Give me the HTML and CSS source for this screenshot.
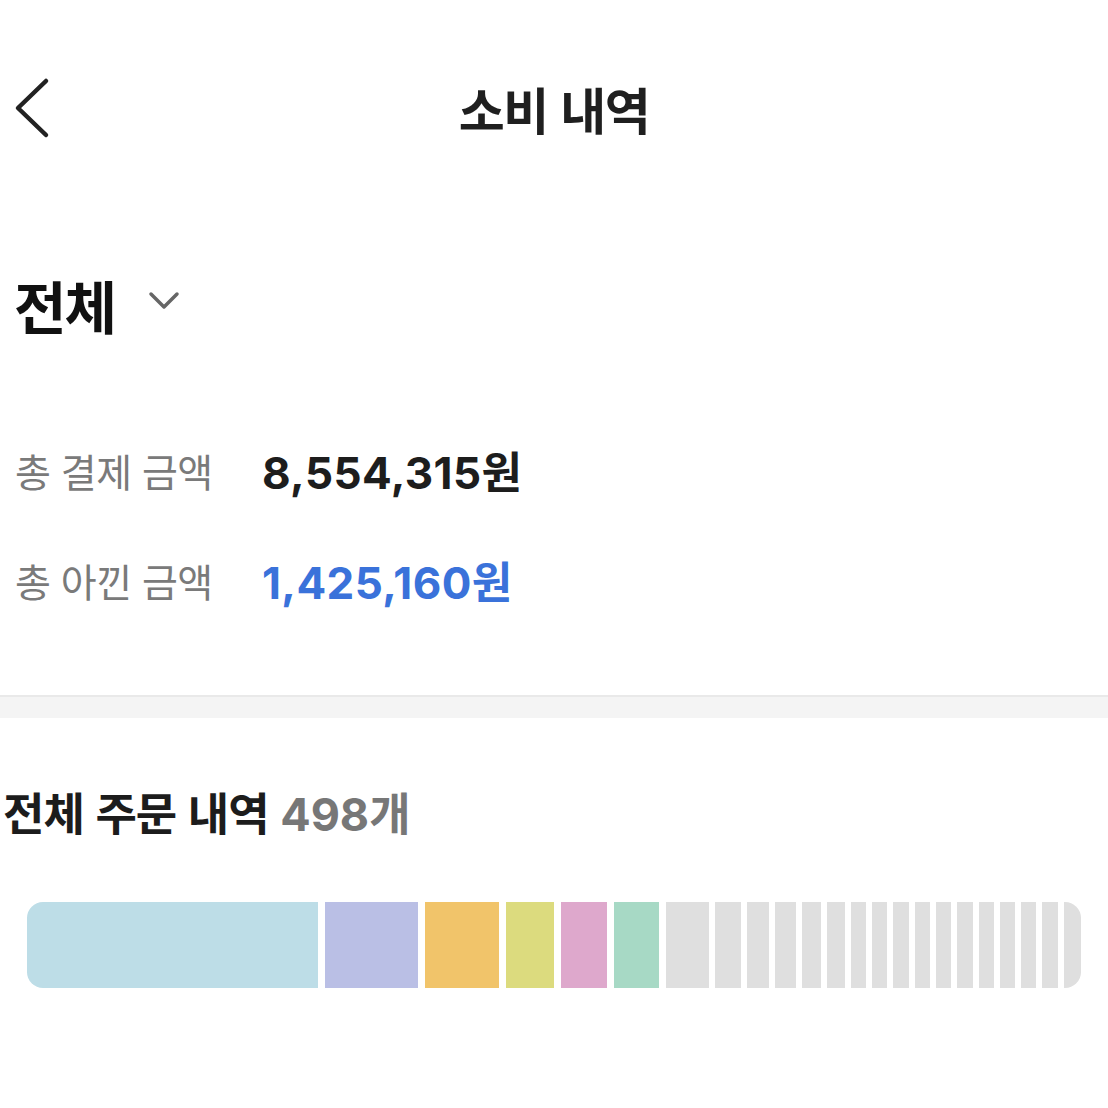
FILE: index.html
```html
<!DOCTYPE html>
<html lang="ko">
<head>
<meta charset="utf-8">
<title>소비 내역</title>
<link rel="stylesheet" href="styles.css">
</head>
<body>
<div class="page">
  <header class="header">
    <button class="back" aria-label="뒤로">
      <svg width="40" height="64" viewBox="0 0 40 64"><polyline points="34,5 6,32 34,59" fill="none" stroke="#222" stroke-width="4.5" stroke-linecap="round" stroke-linejoin="round"/></svg>
    </button>
    <h1 class="title">소비 내역</h1>
  </header>

  <div class="filter">
    <span class="filter-label">전체</span>
    <svg class="filter-caret" width="36" height="24" viewBox="0 0 36 24"><polyline points="4,5 17,18 30,5" fill="none" stroke="#666" stroke-width="3.5" stroke-linecap="round" stroke-linejoin="round"/></svg>
  </div>

  <div class="summary">
    <div class="sum-row">
      <span class="sum-label">총 결제 금액</span>
      <span class="sum-value">8,554,315원</span>
    </div>
    <div class="sum-row">
      <span class="sum-label">총 아낀 금액</span>
      <span class="sum-value blue">1,425,160원</span>
    </div>
  </div>

  <div class="divider"></div>

  <h2 class="orders-title">전체 주문 내역 <span class="count">498개</span></h2>

  <div class="bar">
    <div class="seg c1" style="flex:292"></div>
    <div class="seg c2" style="flex:93"></div>
    <div class="seg c3" style="flex:74"></div>
    <div class="seg c4" style="flex:48"></div>
    <div class="seg c5" style="flex:46"></div>
    <div class="seg c6" style="flex:45"></div>
    <div class="seg g" style="flex:43"></div>
    <div class="seg g" style="flex:26"></div>
    <div class="seg g" style="flex:22"></div>
    <div class="seg g" style="flex:22"></div>
    <div class="seg g" style="flex:19"></div>
    <div class="seg g" style="flex:18"></div>
    <div class="seg g" style="flex:15"></div>
    <div class="seg g" style="flex:15"></div>
    <div class="seg g" style="flex:16"></div>
    <div class="seg g" style="flex:15"></div>
    <div class="seg g" style="flex:15"></div>
    <div class="seg g" style="flex:16"></div>
    <div class="seg g" style="flex:15"></div>
    <div class="seg g" style="flex:15"></div>
    <div class="seg g" style="flex:15"></div>
    <div class="seg g" style="flex:16"></div>
    <div class="seg g" style="flex:17"></div>
  </div>
</div>
</body>
</html>
```

FILE: styles.css
```css
* { box-sizing: border-box; }
html, body {
  margin: 0;
  padding: 0;
  background: #fff;
}
body {
  font-family: "Noto Sans CJK KR", "Noto Sans", sans-serif;
  color: #1c1c1c;
}
.page {
  width: 1108px;
}
.header {
  position: relative;
  margin-top: 58px;
  height: 100px;
  display: flex;
  align-items: center;
  justify-content: center;
}
.back {
  position: absolute;
  left: 12px;
  top: 18px;
  padding: 0;
  border: 0;
  background: none;
  width: 40px;
  height: 64px;
}
.back svg { display: block; }
.title {
  margin: 0;
  font-size: 50px;
  font-weight: 700;
  letter-spacing: -1.5px;
  line-height: 100px;
  color: #1f1f1f;
}
.filter {
  margin-top: 106px;
  height: 80px;
  display: flex;
  align-items: center;
  padding-left: 14px;
  gap: 32px;
}
.filter-label {
  font-size: 57px;
  font-weight: 700;
  letter-spacing: -2px;
  color: #111;
  line-height: 80px;
}
.filter-caret { display: block; margin-top: -6px; }
.summary {
  margin-top: 96px;
  display: flex;
  flex-direction: column;
  gap: 50px;
  padding-left: 15px;
}
.sum-row {
  display: flex;
  align-items: center;
  height: 60px;
}
.sum-label {
  width: 247px;
  font-size: 39px;
  font-weight: 400;
  letter-spacing: -0.5px;
  color: #7a7a7a;
}
.sum-value {
  font-family: "Inter", "Noto Sans CJK KR", sans-serif;
  font-size: 44px;
  font-weight: 700;
  letter-spacing: 0.4px;
  color: #1d1d1d;
}
.sum-value.blue { color: #3a72da; }
.divider {
  margin-top: 85px;
  height: 23px;
  background: #f4f4f4;
  border-top: 2px solid #e9e9e9;
}
.orders-title {
  margin: 64px 0 0 0;
  padding-left: 3px;
  height: 60px;
  line-height: 60px;
  font-size: 45px;
  font-weight: 700;
  letter-spacing: -1px;
  color: #1c1c1c;
}
.count {
  font-family: "Inter", "Noto Sans CJK KR", sans-serif;
  letter-spacing: 0;
  color: #777;
}
.bar {
  margin: 60px 27px 0 27px;
  height: 86px;
  display: flex;
  gap: 6px;
  border-radius: 16px;
  overflow: hidden;
}
.seg { min-width: 0; }
.c1 { background: #bddde7; }
.c2 { background: #babfe5; margin-left: 1px; }
.c3 { background: #f1c46a; margin-left: 1px; }
.c4 { background: #dcdb7e; margin-left: 1px; }
.c5 { background: #dea8cc; margin-left: 1px; }
.c6 { background: #a7d9c5; margin-left: 1px; }
.g { background: #dfdfdf; }
.c6 + .g { margin-left: 1px; }
```
